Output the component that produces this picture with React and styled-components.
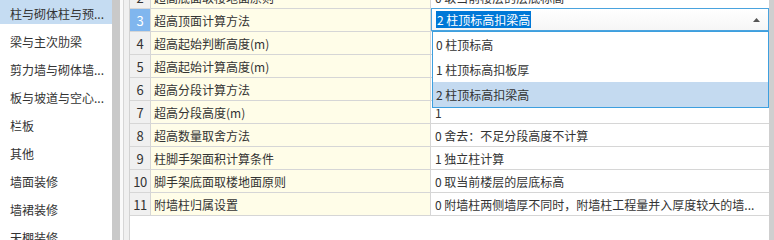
import React from 'react';
import styled, { createGlobalStyle } from 'styled-components';

const Global = createGlobalStyle`
  html, body { margin: 0; padding: 0; background: #fff; }
  body {
    font-family: "Noto Sans CJK SC", "Microsoft YaHei", sans-serif;
    font-size: 12px;
    color: #333;
  }
  * { box-sizing: border-box; }
`;

const Page = styled.div`
  display: flex;
  width: 774px;
  height: 240px;
  overflow: hidden;
  background: #fff;
`;

const Sidebar = styled.div`
  width: 112px;
  flex: none;
  display: flex;
  flex-direction: column;
  gap: 4px;
  overflow: hidden;
`;

const NavItem = styled.div`
  flex: none;
  height: 24px;
  display: flex;
  align-items: center;
  padding: 2px 0 0 10px;
  white-space: nowrap;
  background: ${p => (p.$active ? '#c5dcf2' : 'transparent')};
  color: #333;
`;

const SideScroll = styled.div`
  width: 8px;
  flex: none;
  background: #c9c9c9;
`;

const Splitter = styled.div`
  width: 3px;
  flex: none;
  background: #fafafa;
`;

const GridArea = styled.div`
  flex: 1;
  display: flex;
  border-left: 1px solid #d6d6d6;
  overflow: hidden;
`;

const IndentStrip = styled.div`
  width: 6px;
  flex: none;
  background: #f0f0f0;
  border-right: 1px solid #d2d2d2;
`;

const Rows = styled.div`
  flex: 1;
  display: flex;
  flex-direction: column;
  margin-top: -14px;
`;

const Row = styled.div`
  flex: none;
  height: 23px;
  display: grid;
  grid-template-columns: 21px 280px 1fr;
  border-bottom: 1px solid #d6d6d6;
`;

const NumCell = styled.div`
  display: flex;
  align-items: center;
  justify-content: center;
  border-right: 1px solid #d6d6d6;
  background: ${p => (p.$active ? '#80b6ee' : '#f0f0f0')};
  color: ${p => (p.$active ? '#fff' : '#333')};
  font-size: 13px;
  letter-spacing: ${p => (p.$wide ? '-0.5px' : '0')};
`;

const NameCell = styled.div`
  display: flex;
  align-items: center;
  padding-left: 3px;
  border-right: 1px solid #d6d6d6;
  background: #fffde8;
  white-space: nowrap;
  overflow: hidden;
`;

const ValueCell = styled.div`
  position: relative;
  display: flex;
  align-items: center;
  padding-left: 4px;
  background: #fff;
  white-space: nowrap;
  overflow: visible;
`;

const RightScroll = styled.div`
  width: 5px;
  flex: none;
  background: #cfcfcf;
`;

const Editor = styled.div`
  position: absolute;
  top: -1px;
  left: 0;
  right: 0;
  bottom: 0;
  z-index: 2;
  display: flex;
  align-items: center;
  justify-content: space-between;
  padding: 0 8px 0 4px;
  border: 1px solid #4aa3de;
  background: linear-gradient(#ffffff, #f6f6f6);
`;

const Selected = styled.span`
  background: #0078d7;
  color: #fff;
  line-height: 17px;
  padding: 0 1px;
`;

const DropList = styled.div`
  position: absolute;
  top: 100%;
  left: 1px;
  right: 0;
  z-index: 3;
  background: #fff;
  border: 1px solid #3d9fdf;
  display: flex;
  flex-direction: column;
`;

const DropItem = styled.div`
  height: 25px;
  display: flex;
  align-items: center;
  padding-left: 3px;
  background: ${p => (p.$active ? '#c4daf0' : '#fff')};
  color: #333;
`;

const navItems = [
  '柱与砌体柱与预...',
  '梁与主次肋梁',
  '剪力墙与砌体墙...',
  '板与坡道与空心...',
  '栏板',
  '其他',
  '墙面装修',
  '墙裙装修',
  '天棚装修',
];

const rows = [
  { n: 2, name: '超高底面取楼地面原则', value: '0 取当前楼层的层底标高' },
  { n: 3, name: '超高顶面计算方法', value: '2 柱顶标高扣梁高', editing: true },
  { n: 4, name: '超高起始判断高度(m)', value: '' },
  { n: 5, name: '超高起始计算高度(m)', value: '' },
  { n: 6, name: '超高分段计算方法', value: '' },
  { n: 7, name: '超高分段高度(m)', value: '1' },
  { n: 8, name: '超高数量取舍方法', value: '0 舍去：不足分段高度不计算' },
  { n: 9, name: '柱脚手架面积计算条件', value: '1 独立柱计算' },
  { n: 10, name: '脚手架底面取楼地面原则', value: '0 取当前楼层的层底标高' },
  { n: 11, name: '附墙柱归属设置', value: '0 附墙柱两侧墙厚不同时，附墙柱工程量并入厚度较大的墙...' },
];

const options = ['0 柱顶标高', '1 柱顶标高扣板厚', '2 柱顶标高扣梁高'];

const UpArrow = () => (
  <svg width="7" height="4" viewBox="0 0 7 4">
    <path d="M3.5 0 L7 4 L0 4 Z" fill="#555" />
  </svg>
);

export default function App() {
  return (
    <>
      <Global />
      <Page>
        <Sidebar>
          {navItems.map((t, i) => (
            <NavItem key={t} $active={i === 0}>{t}</NavItem>
          ))}
        </Sidebar>
        <SideScroll />
        <Splitter />
        <GridArea>
          <IndentStrip />
          <Rows>
            {rows.map(r => (
              <Row key={r.n}>
                <NumCell $active={r.editing} $wide={r.n >= 10}>{r.n}</NumCell>
                <NameCell>{r.name}</NameCell>
                <ValueCell>
                  {r.editing ? (
                    <>
                      <Editor>
                        <Selected>{r.value}</Selected>
                        <UpArrow />
                      </Editor>
                      <DropList>
                        {options.map((o, i) => (
                          <DropItem key={o} $active={i === 2}>{o}</DropItem>
                        ))}
                      </DropList>
                    </>
                  ) : (
                    r.value
                  )}
                </ValueCell>
              </Row>
            ))}
          </Rows>
          <RightScroll />
        </GridArea>
      </Page>
    </>
  );
}
